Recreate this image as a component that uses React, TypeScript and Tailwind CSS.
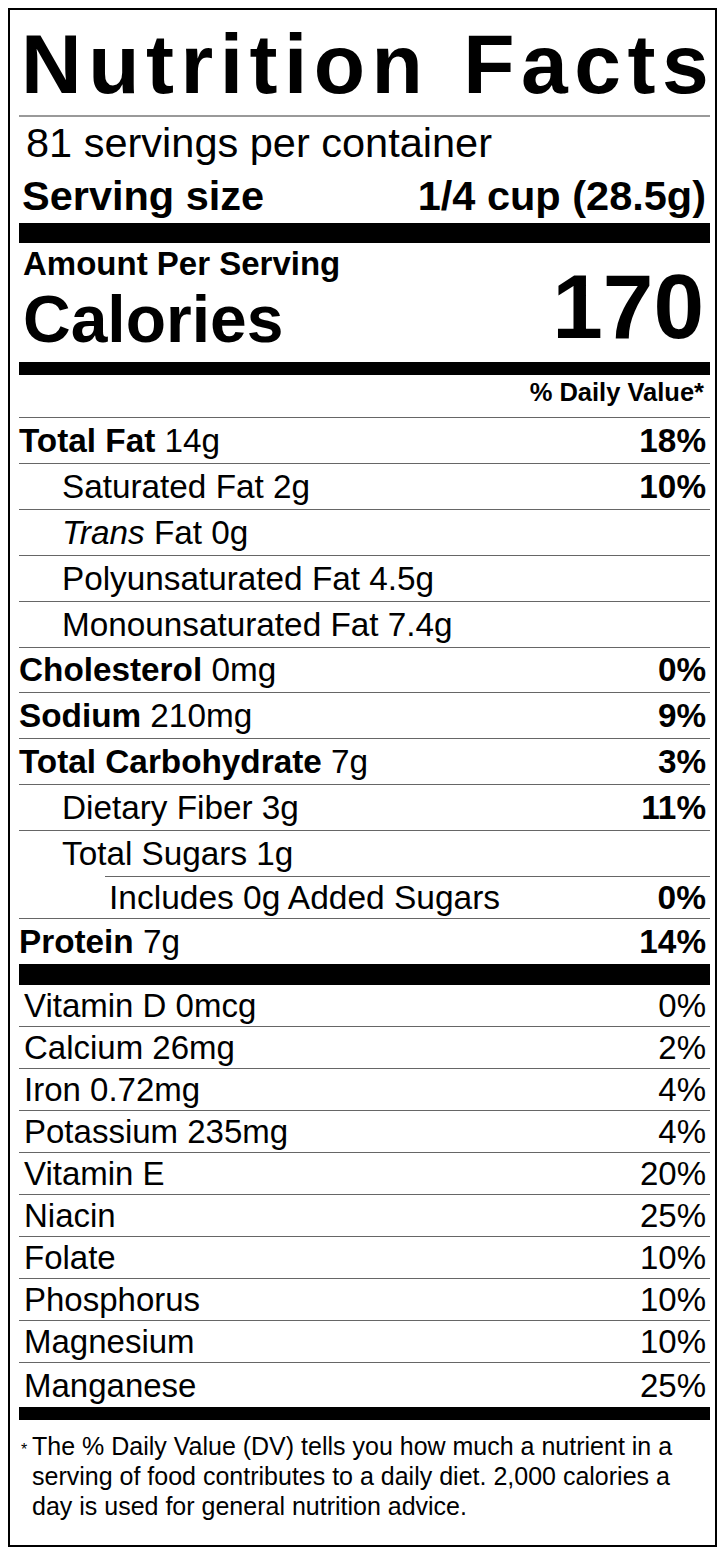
import React from "react";

type Nutrient = {
  label: React.ReactNode;
  dv?: string;
  row: string;
  text: string;
};

const NORMAL = "h-[46px]";
const TOP = "pl-0";
const SUB = "pl-[43px]";

const nutrients: Nutrient[] = [
  { label: <><b>Total Fat</b> 14g</>, dv: "18%", row: NORMAL, text: TOP },
  { label: "Saturated Fat 2g", dv: "10%", row: NORMAL, text: SUB },
  { label: <><i>Trans</i> Fat 0g</>, row: NORMAL, text: SUB },
  { label: "Polyunsaturated Fat 4.5g", row: NORMAL, text: SUB },
  { label: "Monounsaturated Fat 7.4g", row: NORMAL, text: SUB },
  { label: <><b>Cholesterol</b> 0mg</>, dv: "0%", row: "h-[45px]", text: TOP },
  { label: <><b>Sodium</b> 210mg</>, dv: "9%", row: NORMAL, text: TOP },
  { label: <><b>Total Carbohydrate</b> 7g</>, dv: "3%", row: NORMAL, text: TOP },
  { label: "Dietary Fiber 3g", dv: "11%", row: NORMAL, text: SUB },
  { label: "Total Sugars 1g", row: NORMAL, text: SUB },
];

const vitamins = [
  ["Calcium 26mg", "2%"],
  ["Iron 0.72mg", "4%"],
  ["Potassium 235mg", "4%"],
  ["Vitamin E", "20%"],
  ["Niacin", "25%"],
  ["Folate", "10%"],
  ["Phosphorus", "10%"],
  ["Magnesium", "10%"],
];

export default function App() {
  return (
    <div className="bg-white min-h-[1556px] pt-2 pl-2 font-['Liberation_Sans',Arial,sans-serif] text-black">
      <div className="box-border w-[709px] h-[1539px] border-2 border-black pl-[9px] pr-[5px]">
        {/* header */}
        <div className="pt-[6px] pl-[2px] h-[102px] text-[84px] leading-[96px] font-bold tracking-[6.5px] [word-spacing:4px] whitespace-nowrap">
          Nutrition Facts
        </div>
        <div className="mt-[3px] h-[2px] bg-[#999]" />
        <div className="mt-[3px] pl-[7px] text-[41.5px] leading-[46px]">81 servings per container</div>
        <div className="mt-[7px] flex justify-between pl-[3px] pr-[4px] text-[41.5px] leading-[46px] font-bold">
          <span>Serving size</span>
          <span>1/4 cup (28.5g)</span>
        </div>
        <div className="mt-[4px] h-[20px] bg-black" />

        {/* calories */}
        <div className="flex justify-between items-start">
          <div className="pt-[2px] pl-[4px] font-bold">
            <div className="text-[33px] leading-[38px]">Amount Per Serving</div>
            <div className="mt-[3px] text-[66px] leading-[66px]">Calories</div>
          </div>
          <div className="pt-[18px] pr-[6px] text-[91px] leading-[92px] font-bold">170</div>
        </div>
        <div className="mt-[9px] h-[13px] bg-black" />

        <div className="h-[42px] pt-[2px] pr-[6px] text-right text-[25.5px] leading-[30px] font-bold">
          % Daily Value*
        </div>

        {/* nutrients */}
        {nutrients.map((n, i) => (
          <div
            key={i}
            className={`box-border ${n.row} border-t border-[#666] flex items-center justify-between text-[33.3px] leading-[38px] pr-[4px]`}
          >
            <span className={n.text}>{n.label}</span>
            {n.dv && <span className="font-bold">{n.dv}</span>}
          </div>
        ))}
        <div className="box-border h-[42px] ml-[86px] border-t border-[#666] flex items-center justify-between text-[33.5px] leading-[38px] pr-[4px]">
          <span className="pl-[4px]">Includes 0g Added Sugars</span>
          <span className="font-bold">0%</span>
        </div>
        <div className="box-border h-[46px] border-t border-[#666] flex items-center justify-between text-[33.3px] leading-[38px] pr-[4px]">
          <span><b>Protein</b> 7g</span>
          <span className="font-bold">14%</span>
        </div>
        <div className="h-[21px] bg-black" />

        {/* vitamins & minerals */}
        <div className="h-[41px] flex items-center justify-between pl-[5px] pr-[4px] text-[33px] leading-[37px]">
          <span>Vitamin D 0mcg</span>
          <span>0%</span>
        </div>
        {vitamins.map(([name, dv]) => (
          <div
            key={name}
            className="box-border h-[42px] border-t border-[#666] flex items-center justify-between pl-[5px] pr-[4px] text-[33px] leading-[37px]"
          >
            <span>{name}</span>
            <span>{dv}</span>
          </div>
        ))}
        <div className="box-border h-[45px] border-t border-[#666] flex items-center justify-between pl-[5px] pr-[4px] text-[33px] leading-[37px]">
          <span>Manganese</span>
          <span>25%</span>
        </div>
        <div className="h-[13px] bg-black" />

        {/* footnote */}
        <div className="pt-[11px] flex text-[25px] leading-[30px]">
          <span className="w-[13px] pl-[2px] pt-[4px] text-[16px] leading-[30px]">*</span>
          <p>
            The % Daily Value (DV) tells you how much a nutrient in a
            <br />
            serving of food contributes to a daily diet. 2,000 calories a
            <br />
            day is used for general nutrition advice.
          </p>
        </div>
      </div>
    </div>
  );
}
